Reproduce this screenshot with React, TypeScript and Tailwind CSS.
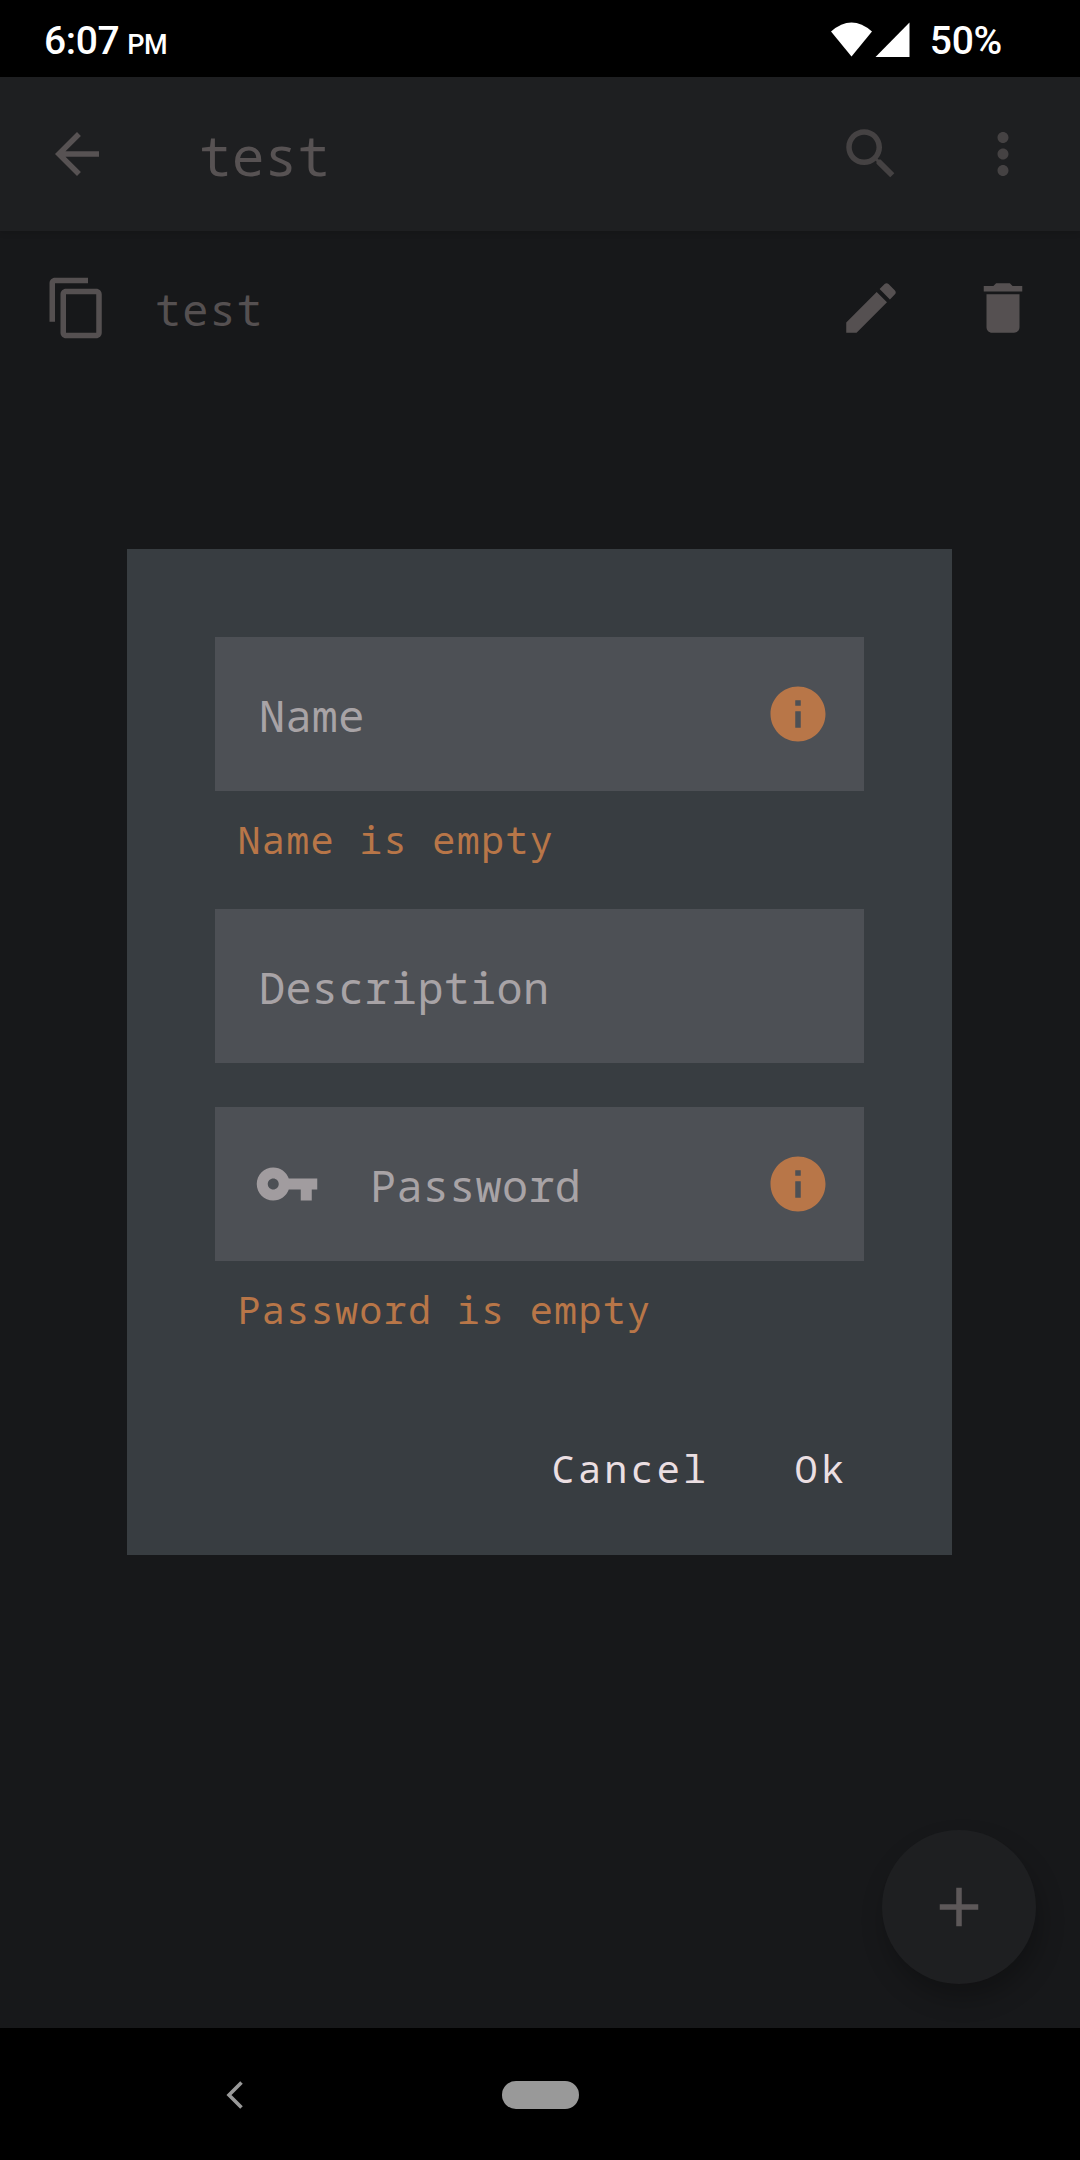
import React from "react";

const PATHS = {
  back: "M20 11H7.83l5.59-5.59L12 4l-8 8 8 8 1.41-1.41L7.83 13H20v-2z",
  search:
    "M15.5 14h-.79l-.28-.27C15.41 12.59 16 11.11 16 9.5 16 5.91 13.09 3 9.5 3S3 5.91 3 9.5 5.91 16 9.5 16c1.61 0 3.09-.59 4.23-1.57l.27.28v.79l5 4.99L20.49 19l-4.99-5zm-6 0C7.01 14 5 11.99 5 9.5S7.01 5 9.5 5 14 7.01 14 9.5 11.99 14 9.5 14z",
  more: "M12 8c1.1 0 2-.9 2-2s-.9-2-2-2-2 .9-2 2 .9 2 2 2zm0 2c-1.1 0-2 .9-2 2s.9 2 2 2 2-.9 2-2-.9-2-2-2zm0 6c-1.1 0-2 .9-2 2s.9 2 2 2 2-.9 2-2-.9-2-2-2z",
  copy: "M16 1H4c-1.1 0-2 .9-2 2v14h2V3h12V1zm3 4H8c-1.1 0-2 .9-2 2v14c0 1.1.9 2 2 2h11c1.1 0 2-.9 2-2V7c0-1.1-.9-2-2-2zm0 16H8V7h11v14z",
  edit: "M3 17.25V21h3.75L17.81 9.94l-3.75-3.75L3 17.25zM20.71 7.04c.39-.39.39-1.02 0-1.41l-2.34-2.34c-.39-.39-1.02-.39-1.41 0l-1.83 1.83 3.75 3.75 1.83-1.83z",
  trash: "M6 19c0 1.1.9 2 2 2h8c1.1 0 2-.9 2-2V7H6v12zM19 4h-3.5l-1-1h-5l-1 1H5v2h14V4z",
  info: "M12 2C6.48 2 2 6.48 2 12s4.48 10 10 10 10-4.48 10-10S17.52 2 12 2zm1 15h-2v-6h2v6zm0-8h-2V7h2v2z",
  key: "M12.65 10C11.83 7.67 9.61 6 7 6c-3.31 0-6 2.69-6 6s2.69 6 6 6c2.61 0 4.83-1.67 5.65-4H17v4h4v-4h2v-4H12.65zM7 14c-1.1 0-2-.9-2-2s.9-2 2-2 2 .9 2 2-.9 2-2 2z",
  add: "M19 13h-6v6h-2v-6H5v-2h6V5h2v6h6v2z",
};

function Icon({ name, className = "" }: { name: keyof typeof PATHS; className?: string }) {
  return (
    <svg viewBox="0 0 24 24" fill="currentColor" className={`size-[66px] shrink-0 ${className}`}>
      <path d={PATHS[name]} />
    </svg>
  );
}

function StatusBar() {
  return (
    <div className="flex h-[77px] items-center bg-black pr-[78px] pl-[44px] font-[Roboto] font-medium text-white">
      <div className="flex flex-1 items-baseline pt-[6px] leading-none">
        <span className="text-[39px] tracking-[-0.4px]">6:07</span>
        <span className="ml-[8px] text-[27px] tracking-[-0.4px]">PM</span>
      </div>
      <svg viewBox="0 0 80 36" className="mr-[20px] h-[36px] w-[80px]" fill="#fff">
        <path d="M1 10.500Q21.500-7.500 42 10.500L21.500 35.500Z" />
        <path d="M45.500 36H79.500V1.500Z" />
      </svg>
      <span className="pt-[6px] text-[39px] leading-none tracking-[-0.3px]">50%</span>
    </div>
  );
}

function Field({ label, leading, error }: { label: string; leading?: boolean; error?: boolean }) {
  return (
    <div className="flex h-[154px] items-center bg-[#4d5055] pr-[33px] pl-[39px] text-[#a8a3a6]">
      {leading && <Icon name="key" className="mr-[50px] text-[#a19c9f]" />}
      <span className={`flex-1 pt-[2px] text-[43.5px] leading-[60px] tracking-[0.3px] ${leading ? "" : "ml-[5px]"}`}>{label}</span>
      {error && <Icon name="info" className="text-[#b87648]" />}
    </div>
  );
}

function ErrorText({ children }: { children: string }) {
  return <p className="pl-[22.5px] text-[38.5px] leading-[52px] tracking-[1.25px] text-[#b87648]">{children}</p>;
}

function NavBar() {
  return (
    <div className="flex h-[132px] items-center bg-black pt-px pl-[226px]">
      <svg viewBox="0 0 18 28" className="h-[28px] w-[18px]" fill="none" stroke="#999" strokeWidth="3.600">
        <path d="M15.500 1.500 3 14 15.500 26.500" />
      </svg>
      <div className="ml-[258px] h-[28px] w-[77px] rounded-full bg-[#999]" />
    </div>
  );
}

export default function App() {
  return (
    <div className="relative flex h-[2160px] w-[1080px] flex-col overflow-hidden bg-[#17181a] font-['Noto_Sans_Mono','Droid_Sans_Mono','DejaVu_Sans_Mono',monospace] whitespace-nowrap">
      <StatusBar />
      <header className="flex h-[154px] items-center bg-[#1e1f21] px-[44px] text-[#575253] shadow-[0_2px_6px_rgba(0,0,0,0.12)]">
        <Icon name="back" />
        <h1 className="ml-[89px] flex-1 pt-[4px] text-[54.5px] tracking-[0.1px]">test</h1>
        <Icon name="search" className="mr-[66px] text-[#454243]" />
        <Icon name="more" className="text-[#454243]" />
      </header>
      <main className="flex flex-1 flex-col justify-between">
        <div className="flex h-[154px] items-center px-[44px] text-[#555051]">
          <Icon name="copy" />
          <span className="ml-[45px] flex-1 pt-[4px] text-[43.5px] tracking-[1.1px]">test</span>
          <Icon name="edit" className="mr-[66px]" />
          <Icon name="trash" />
        </div>
        <button className="mr-[44px] mb-[44px] flex size-[154px] items-center justify-center self-end rounded-full bg-[#1e1f21] text-[#5d5859] shadow-[4px_14px_24px_rgba(0,0,0,0.25)]">
          <Icon name="add" />
        </button>
      </main>
      <NavBar />

      <div className="absolute inset-0 flex items-start justify-center pt-[549px] pr-px">
        <section role="dialog" className="flex h-[1006px] w-[825px] flex-col bg-[#383d41] px-[88px] pt-[88px]">
          <Field label="Name" error />
          <div className="h-[118px] pt-[22px]">
            <ErrorText>Name is empty</ErrorText>
          </div>
          <Field label="Description" />
          <div className="mt-[44px]">
            <Field label="Password" leading error />
          </div>
          <div className="pt-[22px]">
            <ErrorText>Password is empty</ErrorText>
          </div>
          <div className="mt-[107px] mr-[17px] flex justify-end gap-[85px] text-[38.5px] leading-[52px] tracking-[3.2px] text-[#ebdfe2]">
            <button>Cancel</button>
            <button>Ok</button>
          </div>
        </section>
      </div>
    </div>
  );
}
